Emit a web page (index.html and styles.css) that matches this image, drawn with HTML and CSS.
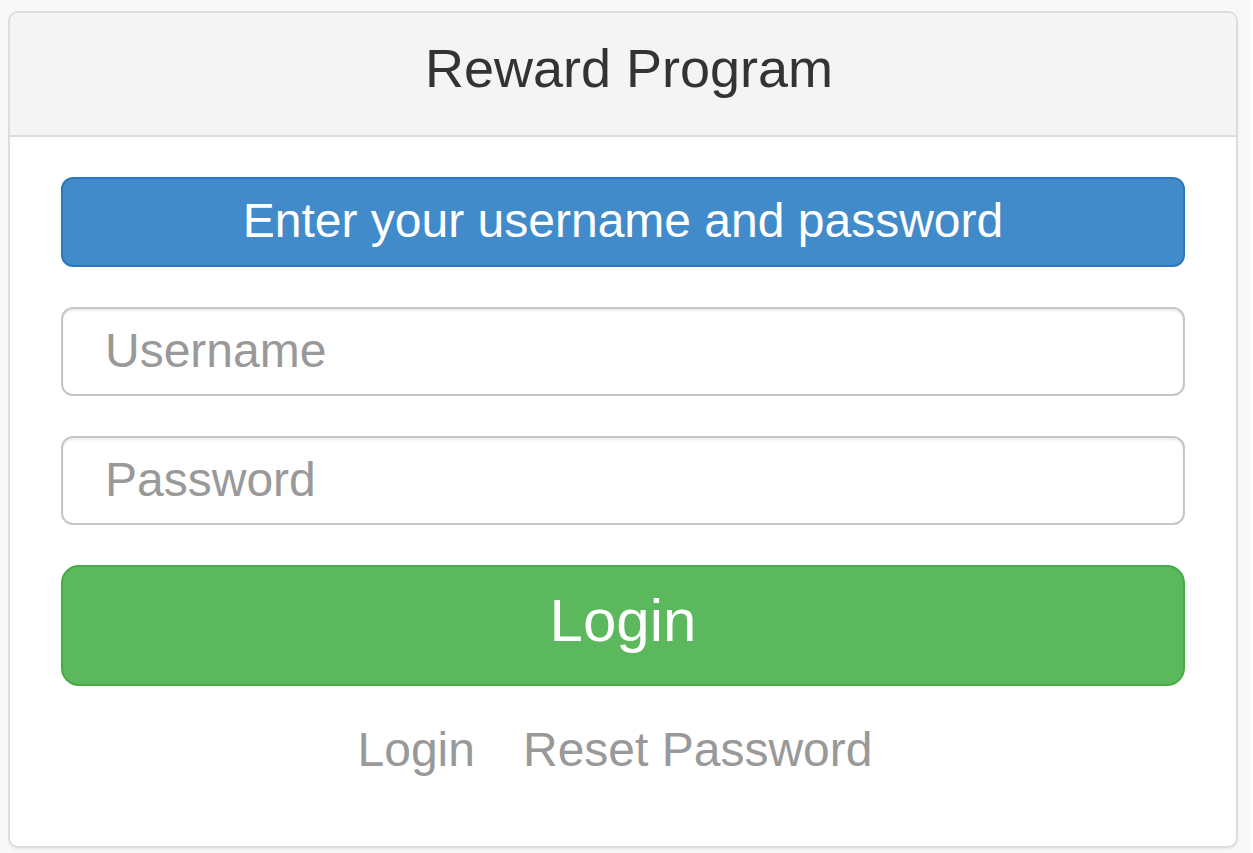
FILE: index.html
```html
<!DOCTYPE html>
<html lang="en">
<head>
<meta charset="utf-8">
<meta name="viewport" content="width=device-width, initial-scale=1">
<title>Reward Program</title>
<link rel="stylesheet" href="styles.css">
</head>
<body>
<main class="panel">
  <header class="panel-heading">
    <h1 class="panel-title">Reward Program</h1>
  </header>
  <form class="panel-body">
    <p class="notice">Enter your username and password</p>
    <input class="field" type="text" name="username" placeholder="Username" aria-label="Username">
    <input class="field" type="password" name="password" placeholder="Password" aria-label="Password">
    <button class="submit" type="submit">Login</button>
    <nav class="links">
      <a class="link" href="#login">Login</a>
      <a class="link" href="#reset">Reset Password</a>
    </nav>
  </form>
</main>
</body>
</html>
```
FILE: styles.css
```css
* {
  box-sizing: border-box;
}

html {
  background: #f8f8f8;
}

body {
  margin: 0;
  padding: 11px 12px 5px 8px;
  border-right: 3px solid #fdfdfd;
  color: #333;
  font-family: "Liberation Sans", Arial, sans-serif;
}

.panel {
  background: #fff;
  border: 2px solid #ddd;
  border-radius: 10px;
  box-shadow: 0 2px 2px rgba(0, 0, 0, 0.05);
}

.panel-heading {
  padding: 30px 24px 42px 36px;
  border-bottom: 2px solid #ddd;
  border-radius: 8px 8px 0 0;
  background: #f4f4f4;
}

.panel-title {
  margin: 0;
  font-size: 54px;
  font-weight: 400;
  line-height: 50px;
  text-align: center;
}

.panel-body {
  display: flex;
  flex-direction: column;
  gap: 40px;
  padding: 40px 51px 72px;
}

.notice {
  margin: 0;
  padding: 17px 18px 19px;
  border: 2px solid #2d78bd;
  border-radius: 12px;
  background: #428bca;
  color: #fff;
  font-size: 48px;
  line-height: 50px;
  text-align: center;
}

.field {
  width: 100%;
  padding: 17px 42px 18px;
  border: 2px solid #c6c6c6;
  border-radius: 12px;
  background: #fff;
  box-shadow: inset 0 2px 2px rgba(0, 0, 0, 0.075);
  color: #555;
  font: 48px/50px "Liberation Sans", Arial, sans-serif;
}

.field::placeholder {
  color: #999;
  opacity: 1;
}

.submit {
  padding: 24px 28px 33px;
  border: 2px solid #45ab45;
  border-radius: 18px;
  background: #5cb85c;
  color: #fff;
  font: 60px/60px "Liberation Sans", Arial, sans-serif;
}

.links {
  display: flex;
  justify-content: center;
  gap: 48px;
  padding-right: 16px;
}

.link {
  color: #999;
  font-size: 48px;
  line-height: 48px;
  text-decoration: none;
}
```
